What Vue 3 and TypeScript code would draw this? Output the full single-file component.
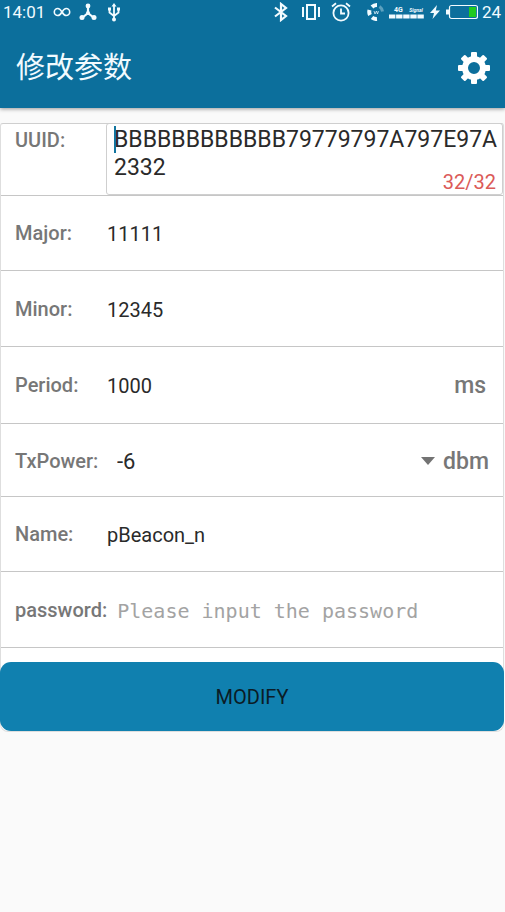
<script setup lang="ts">
import { computed, ref } from 'vue'

const uuid = ref('BBBBBBBBBBBB79779797A797E97A2332')
const uuidMax = 32
const major = ref('11111')
const minor = ref('12345')
const period = ref('1000')
const txPower = ref('-6')
const name = ref('pBeacon_n')
const password = ref('')

const powerLevels = ['-30', '-20', '-16', '-12', '-8', '-6', '-4', '0', '4']
const counter = computed(() => `${uuid.value.length}/${uuidMax}`)
</script>

<template>
  <div class="screen">
    <header class="top">
      <div class="status">
        <div class="status-group left">
          <span>14:01</span>
          <svg class="infinity" width="18" height="12" viewBox="0 0 18 12" fill="none" stroke="currentColor" stroke-width="1.6">
            <path d="M9 6C7.500 3.500 6.200 2.500 4.800 2.500a3.500 3.500 0 0 0 0 7C6.200 9.500 7.500 8.500 9 6s2.800-3.500 4.200-3.500a3.500 3.500 0 0 1 0 7C11.800 9.500 10.500 8.500 9 6z" />
          </svg>
          <svg width="18" height="18" viewBox="0 0 18 18" fill="currentColor">
            <path d="M9 3v7M9 10l-6 5M9 10l6 5" stroke="currentColor" stroke-width="2.200" />
            <circle cx="9" cy="3" r="2.400" /><circle cx="3" cy="14.500" r="2.500" /><circle cx="15" cy="14.500" r="2.500" /><circle cx="9" cy="10" r="2" />
          </svg>
          <svg class="usb" width="14" height="20" viewBox="0 0 14 20" fill="none" stroke="currentColor" stroke-width="1.800">
            <path d="M7 3v14M2.500 7v3.500L7 14M11.500 7v3.500L7 14" />
            <path d="M7 1l2.500 3.500h-5zM1 5.500h3v3H1zM10 5.500h3v3h-3z" fill="currentColor" stroke="none" />
            <circle cx="7" cy="17.500" r="2" fill="currentColor" stroke="none" />
          </svg>
        </div>
        <div class="status-group right">
          <svg width="14" height="20" viewBox="0 0 14 20" fill="none" stroke="currentColor" stroke-width="2.200">
            <path d="M1 5.500l11 8.500-5 4V2l5 4L1 14.500" />
          </svg>
          <svg class="vibrate" width="20" height="18" viewBox="0 0 20 18" fill="none" stroke="currentColor" stroke-width="2">
            <path d="M6 2h8v14H6zM2 4v10M18 4v10" />
          </svg>
          <svg class="alarm" width="20" height="20" viewBox="0 0 20 20" fill="none" stroke="currentColor" stroke-width="1.800">
            <circle cx="10" cy="11" r="7.600" /><path d="M10 6.500V11.500h4M1 4.500L5 1.200M19 4.500L15 1.200" />
          </svg>
          <svg class="fan" width="18" height="18" viewBox="0 0 18 18" fill="none" stroke="currentColor">
            <path d="M3 12a7 7 0 0 1-.5-5M5 4a7 7 0 0 1 5-2M5 14.500a7 7 0 0 0 5 1.500" stroke-width="4" />
            <path d="M12.500 3.500a7 7 0 0 1 3 5" stroke-width="3" opacity=".35" />
            <path d="M7 8l1 3 1.500-3 1 3 1-3" stroke-width="1" opacity=".7" />
          </svg>
          <div class="signal">
            <div class="signal-text"><b>4G</b><i>Signal</i></div>
            <svg width="35" height="5" viewBox="0 0 35 5"><path d="M0 2.500h35" stroke="currentColor" stroke-width="4" stroke-dasharray="6.400 .7" /></svg>
          </div>
          <svg width="10" height="14" viewBox="0 0 10 14" fill="currentColor"><path d="M7 0L0 8h4l-1.500 6L10 5.500H5.800z" /></svg>
          <svg class="battery" width="32" height="16" viewBox="0 0 32 16" fill="none">
            <rect x="3.500" y="1.500" width="28" height="13" rx="2" stroke="currentColor" stroke-width="1.200" />
            <path d="M0 5.500h3v5H0z" fill="currentColor" /><path d="M23 3h7v10h-7z" fill="#1fca20" />
          </svg>
          <span class="percent">24</span>
        </div>
      </div>
      <div class="app-bar">
        <h1>修改参数</h1>
        <button class="settings" type="button" aria-label="Settings">
          <svg width="32" height="32" viewBox="0 0 32 32">
            <g fill="currentColor">
              <rect v-for="n in 8" :key="n" x="13" y="0" width="6" height="9" rx="1" :transform="`rotate(${n * 45} 16 16)`" />
            </g>
            <circle cx="16" cy="16" r="9" fill="none" stroke="currentColor" stroke-width="6" />
          </svg>
        </button>
      </div>
    </header>

    <form class="card" @submit.prevent>
      <div class="row uuid-row">
        <label for="uuid">UUID:</label>
        <div class="uuid-box">
          <span class="caret"></span>
          <textarea id="uuid" v-model="uuid" rows="2" :maxlength="uuidMax" spellcheck="false"></textarea>
          <span class="counter">{{ counter }}</span>
        </div>
      </div>
      <div class="row">
        <label for="major">Major:</label>
        <input id="major" v-model="major" type="text" inputmode="numeric" />
      </div>
      <div class="row medium">
        <label for="minor">Minor:</label>
        <input id="minor" v-model="minor" type="text" inputmode="numeric" />
      </div>
      <div class="row tall">
        <label for="period">Period:</label>
        <input id="period" v-model="period" type="text" inputmode="numeric" />
        <span class="unit ms">ms</span>
      </div>
      <div class="row short">
        <label for="power">TxPower:</label>
        <div class="select-wrap">
          <select id="power" v-model="txPower">
            <option v-for="level in powerLevels" :key="level" :value="level">{{ level }}</option>
          </select>
          <svg width="14" height="8" viewBox="0 0 14 8" fill="#737373"><path d="M0 0h14L7 8z" /></svg>
        </div>
        <span class="unit">dbm</span>
      </div>
      <div class="row">
        <label for="name">Name:</label>
        <input id="name" v-model="name" type="text" spellcheck="false" />
      </div>
      <div class="row medium">
        <label for="password">password:</label>
        <input id="password" v-model="password" class="password" type="password" placeholder="Please input the password" />
      </div>
      <button class="modify" type="submit">MODIFY</button>
    </form>
  </div>
</template>

<style>
body {
  margin: 0;
  background: #fafafa;
}
</style>

<style scoped>
.screen {
  font-family: Roboto, "Noto Sans CJK SC", sans-serif;
  color: #2a2a2a;
}
.screen * {
  box-sizing: border-box;
}
svg {
  display: block;
  flex: none;
}
.top {
  background: #0c6f9c;
  color: #f2fbff;
  box-shadow: 0 1px 4px rgba(0, 0, 0, 0.4);
}
.status {
  display: flex;
  justify-content: space-between;
  height: 24px;
  padding: 0 4px 0 3px;
  font-size: 17px;
  line-height: 24px;
}
.status-group {
  display: flex;
  align-items: center;
}
.left {
  gap: 8px;
}
.usb {
  margin-left: 2px;
}
.vibrate {
  margin-left: 13px;
}
.alarm {
  margin-left: 10px;
}
.fan {
  margin-left: 16px;
}
.signal {
  width: 35px;
  margin: 0 6px 0 4px;
}
.signal-text {
  display: flex;
  justify-content: space-between;
  padding: 0 1px 0 5px;
  font-size: 7px;
  line-height: 8px;
}
.signal-text i {
  font-size: 5px;
  font-weight: 700;
}
.battery {
  margin-left: 6px;
}
.percent {
  margin-left: 4px;
}
.app-bar {
  display: flex;
  align-items: center;
  justify-content: space-between;
  height: 84px;
  padding: 4px 15px 0 16px;
}
h1 {
  margin: 0;
  font-size: 29px;
  font-weight: 400;
  line-height: 40px;
}
.settings {
  padding: 0;
  border: 0;
  background: none;
  color: #fff;
}
.card {
  margin: 15px 1px 0 0;
  border: 1px solid #dedede;
  border-top-color: #cfcfcf;
  border-radius: 3px 3px 8px 8px;
  background: #fff;
}
.row {
  display: flex;
  align-items: center;
  height: 75px;
  padding: 0 14px;
  border-bottom: 1px solid #c6c6c6;
}
.row.medium {
  height: 76px;
}
.row.tall {
  height: 77px;
}
.row.short {
  height: 73px;
  padding-top: 2px;
}
label {
  flex: none;
  min-width: 92px;
  font-size: 20px;
  font-weight: 500;
  line-height: 24px;
  color: #777;
}
input,
select,
textarea {
  flex: 1;
  min-width: 0;
  margin: 0;
  padding: 2px 0 0;
  border: 0;
  outline: 0;
  border-radius: 0;
  background: transparent;
  color: inherit;
  font-family: inherit;
  font-size: 20px;
  line-height: 28px;
}
.uuid-row {
  align-items: stretch;
  height: 72px;
  padding-right: 0;
}
.uuid-row label {
  padding-top: 4px;
}
.uuid-box {
  position: relative;
  display: flex;
  flex: 1;
  margin: -1px 0 0 -1px;
  border: 1px solid #cfcfcf;
  border-radius: 3px;
}
textarea {
  padding: 2px 2px 0 7px;
  overflow: hidden;
  resize: none;
  font-size: 23px;
  word-break: break-all;
}
.caret {
  position: absolute;
  top: 2px;
  left: 7px;
  width: 2px;
  height: 27px;
  background: #12759f;
}
.counter {
  position: absolute;
  right: 6px;
  bottom: 0;
  font-size: 20px;
  line-height: 24px;
  color: #db5a58;
}
.unit {
  padding-top: 2px;
  font-size: 23px;
  font-weight: 500;
  line-height: 28px;
  color: #777;
}
.unit.ms {
  margin-right: 3px;
}
.select-wrap {
  display: flex;
  flex: 1;
  align-items: center;
  margin: 0 8px 0 10px;
}
select {
  appearance: none;
  font-size: 22px;
}
.password {
  margin-left: 10px;
}
.password::placeholder {
  color: #a3a3a3;
  font-family: "DejaVu Sans Mono", monospace;
  opacity: 1;
}
.modify {
  display: block;
  width: calc(100% + 2px);
  height: 69px;
  margin: 14px -1px 0;
  padding: 0;
  border: 0;
  border-radius: 11px;
  background: #1080af;
  color: #0b1c26;
  font-family: inherit;
  font-size: 20px;
  font-weight: 400;
  line-height: 24px;
}
</style>
